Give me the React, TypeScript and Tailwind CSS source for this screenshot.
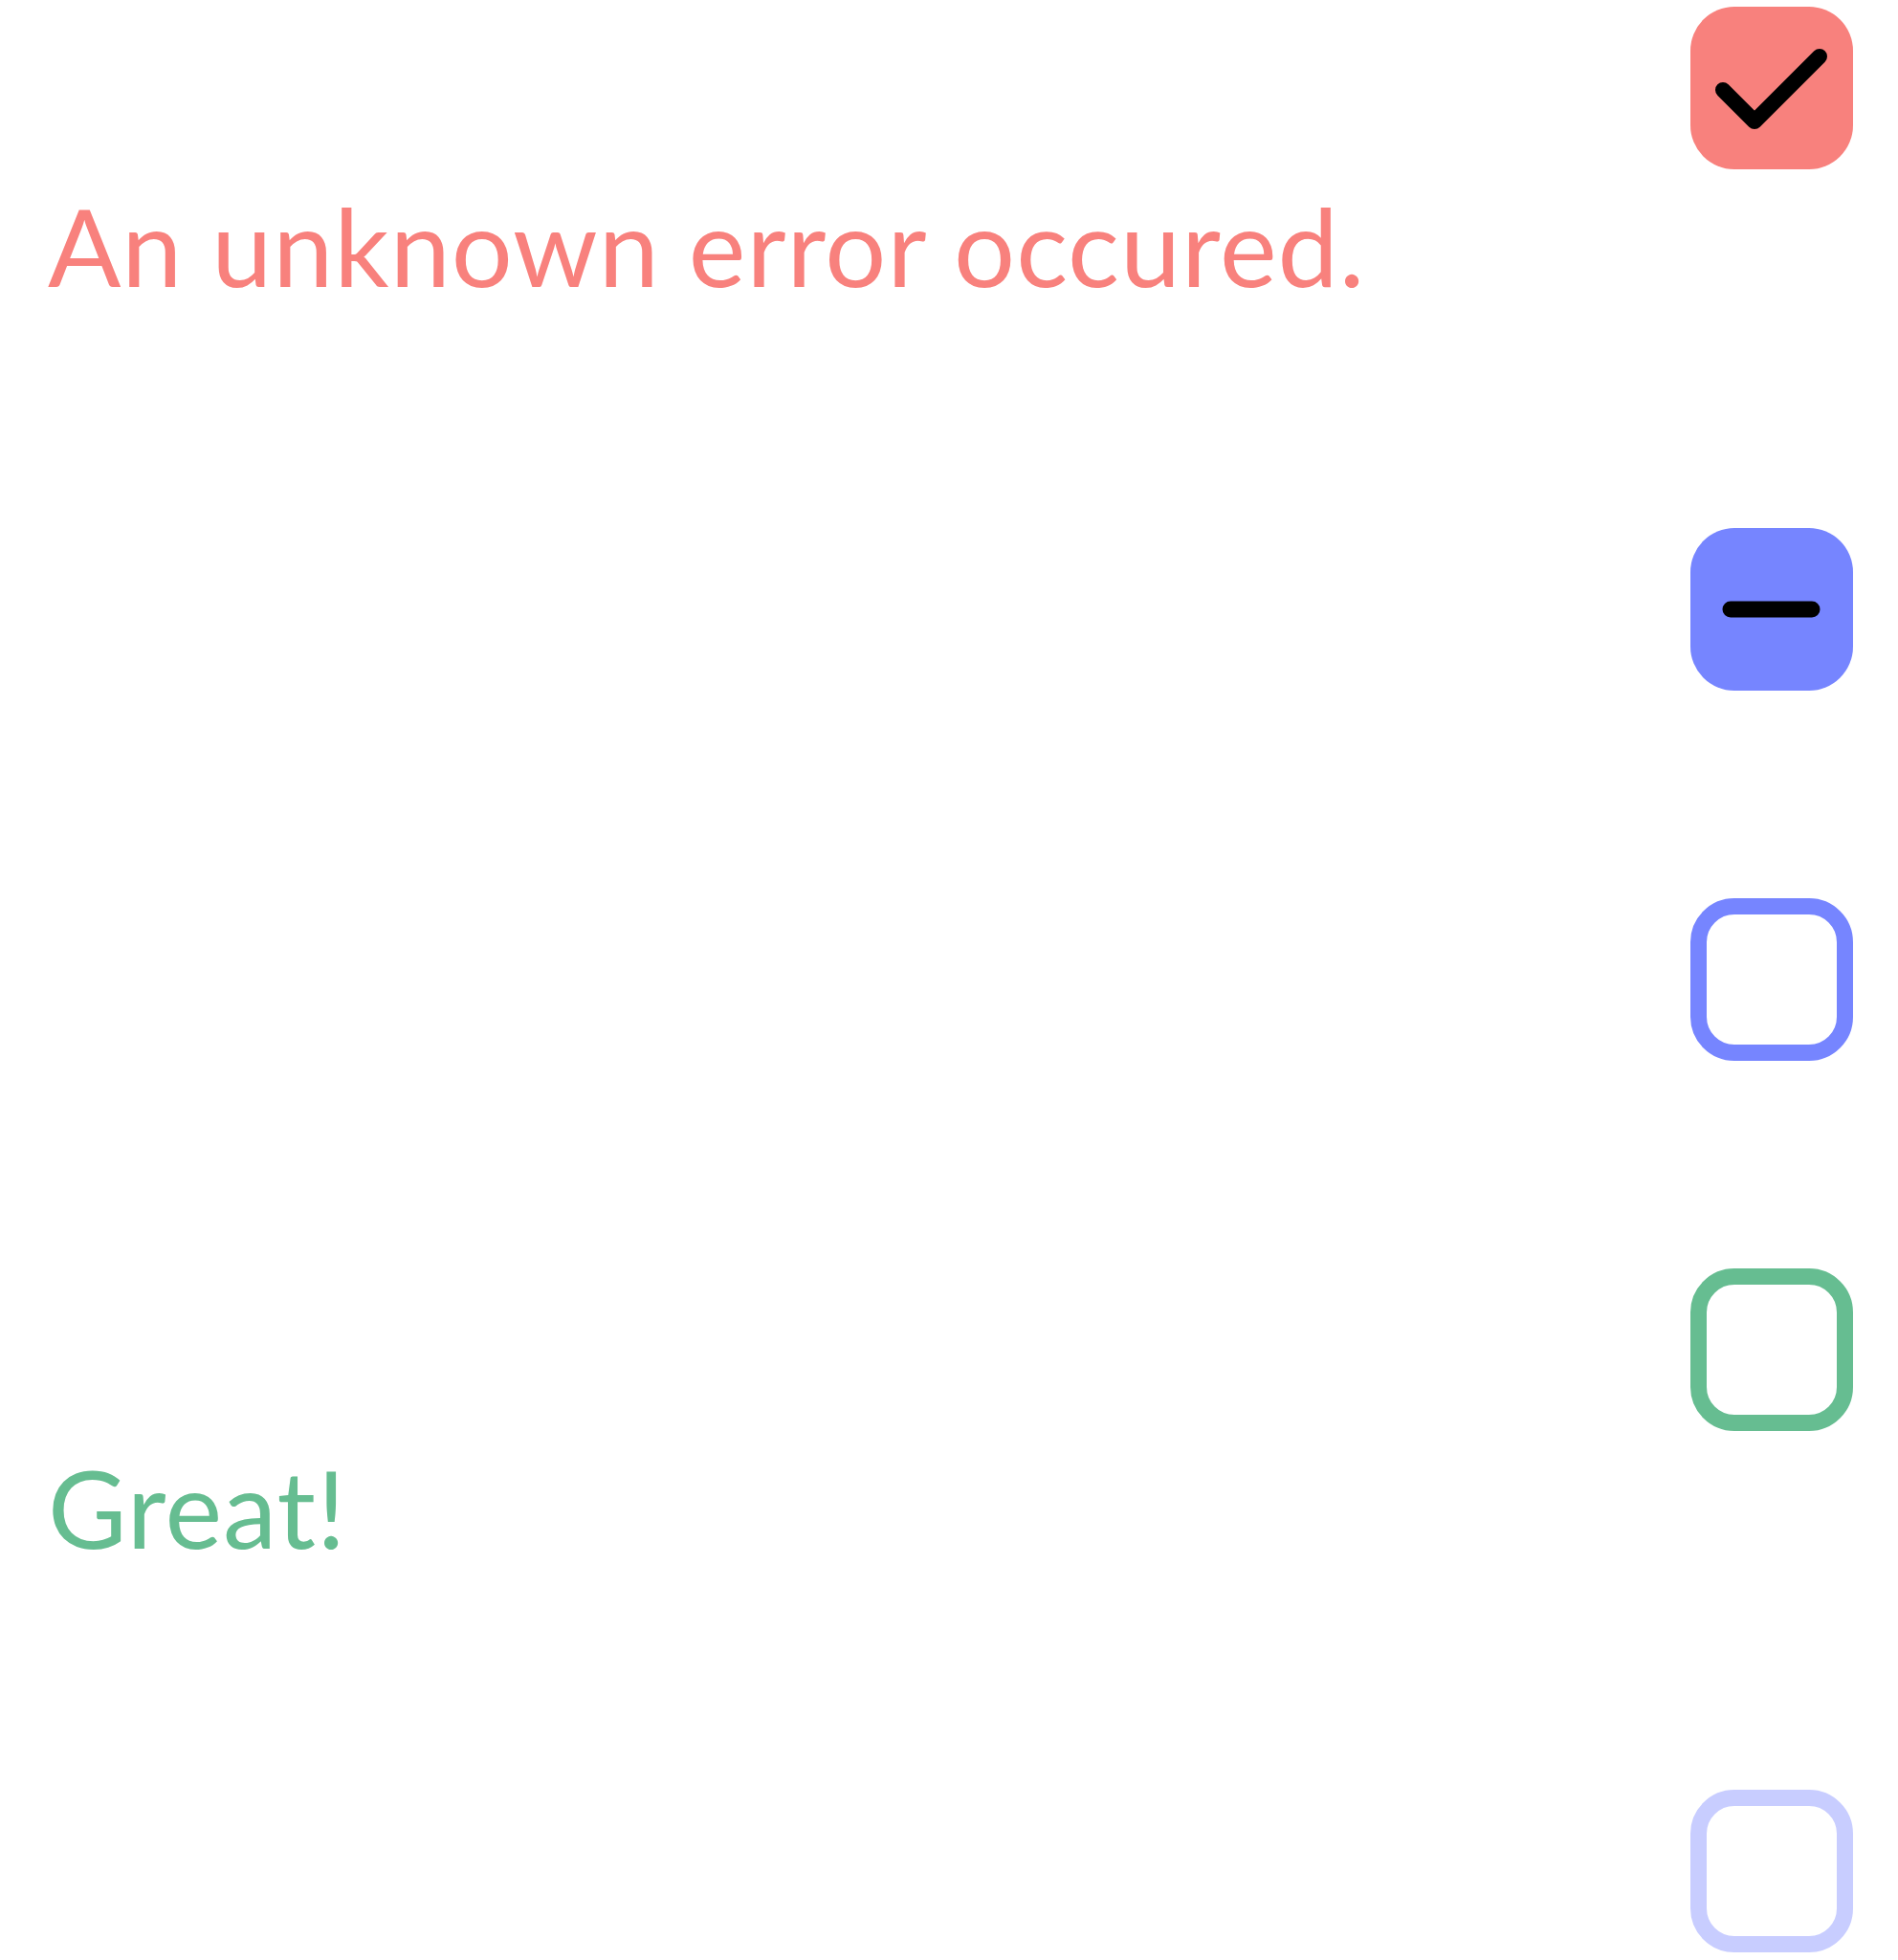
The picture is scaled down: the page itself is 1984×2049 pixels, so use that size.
import React from 'react';

type Status = 'checked' | 'indeterminate' | 'unchecked';

interface ItemProps {
  status: Status;
  tone: 'red' | 'blue' | 'green' | 'disabled';
  message?: string;
}

const Checkbox: React.FC<{ status: Status; tone: ItemProps['tone'] }> = ({ status, tone }) => {
  if (status === 'checked') {
    return (
      <div className="w-[170px] h-[170px] rounded-[46px] bg-[#f8817d] flex items-center justify-center">
        <svg width="170" height="170" viewBox="0 0 170 170" fill="none">
          <path d="M34 87 L67 120 L135 52" stroke="#000" strokeWidth="16" strokeLinecap="round" strokeLinejoin="round" />
        </svg>
      </div>
    );
  }
  if (status === 'indeterminate') {
    return (
      <div className="w-[170px] h-[170px] rounded-[46px] bg-[#7685ff] flex items-center justify-center">
        <svg width="170" height="170" viewBox="0 0 170 170" fill="none">
          <path d="M42 85 L127 85" stroke="#000" strokeWidth="17" strokeLinecap="round" />
        </svg>
      </div>
    );
  }
  const border = {
    red: 'border-[#f8817d]',
    blue: 'border-[#7685ff]',
    green: 'border-[#66bd91]',
    disabled: 'border-[#c8cdff]',
  }[tone];
  return <div className={`w-[170px] h-[170px] rounded-[46px] border-[17px] bg-white ${border}`} />;
};

const Item: React.FC<ItemProps> = ({ status, tone, message }) => {
  const textColor = tone === 'red' ? 'text-[#f8817d]' : 'text-[#66bd91]';
  return (
    <div>
      <div className="flex justify-end">
        <Checkbox status={status} tone={tone} />
      </div>
      {message && (
        <p
          className={`h-[158px] font-['Lato',sans-serif] text-[113px] leading-[158px] tracking-[1px] whitespace-nowrap ${textColor}`}
        >
          {message}
        </p>
      )}
    </div>
  );
};

export default function App() {
  return (
    <div className="min-h-screen bg-white pl-[50px] pr-[47px] pt-[7px] overflow-hidden">
      <div className="flex flex-col gap-[217px]">
        <Item status="checked" tone="red" message="An unknown error occured." />
        <Item status="indeterminate" tone="blue" />
        <Item status="unchecked" tone="blue" />
        <Item status="unchecked" tone="green" message="Great!" />
        <Item status="unchecked" tone="disabled" />
      </div>
    </div>
  );
}
